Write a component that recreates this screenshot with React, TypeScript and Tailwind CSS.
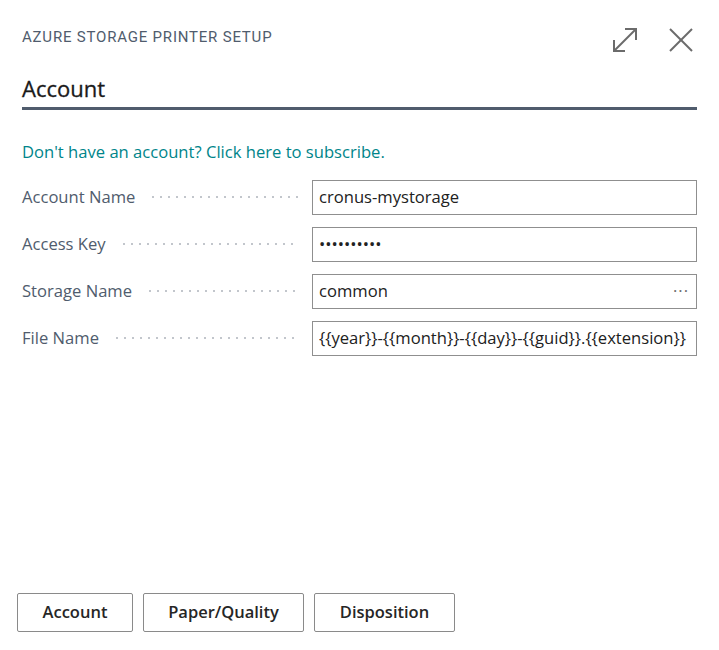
import { useState } from "react";

type Field = {
  label: string;
  value: string;
  lookup?: boolean;
};

const fields: Field[] = [
  { label: "Account Name", value: "cronus-mystorage" },
  { label: "Access Key", value: "••••••••••" },
  { label: "Storage Name", value: "common", lookup: true },
  { label: "File Name", value: "{{year}}-{{month}}-{{day}}-{{guid}}.{{extension}}" },
];

const tabs = ["Account", "Paper/Quality", "Disposition"];

function ExpandIcon() {
  return (
    <svg width="28" height="28" viewBox="0 0 28 28" fill="none" stroke="#6b6b6b" strokeWidth="2">
      <path d="M3 25 L25 3" />
      <path d="M14 3 H25 V14" />
      <path d="M3 14 V25 H14" />
    </svg>
  );
}

function CloseIcon() {
  return (
    <svg width="24" height="24" viewBox="0 0 24 24" fill="none" stroke="#6b6b6b" strokeWidth="2">
      <path d="M1 1 L23 23" />
      <path d="M23 1 L1 23" />
    </svg>
  );
}

export default function App() {
  const [activeTab, setActiveTab] = useState("Account");

  return (
    <div className="h-[650px] w-[719px] bg-white flex flex-col font-['Open_Sans',sans-serif]">
      <div className="flex items-start justify-between pl-[22px] pr-[26px] pt-[26px]">
        <div className="text-[15px] leading-[20px] tracking-[0.8px] text-[#505c6d] font-['Roboto',sans-serif] mt-[1px]">
          AZURE STORAGE PRINTER SETUP
        </div>
        <div className="flex items-center gap-[30px]">
          <button className="w-[28px] h-[28px]">
            <ExpandIcon />
          </button>
          <button className="w-[24px] h-[24px]">
            <CloseIcon />
          </button>
        </div>
      </div>

      <div className="mx-[22px] mt-[20px] border-b-[3px] border-[#505c6d] pb-[5px]">
        <h1 className="text-[22px] leading-[28px] [-webkit-text-stroke:0.3px_#1a1a1a] text-[#1a1a1a]">{activeTab}</h1>
      </div>

      <div className="px-[22px] mt-[30px] text-[16.6px]">
        <a className="leading-[24px] text-[#00858a] cursor-pointer">
          Don't have an account? Click here to subscribe.
        </a>

        <div className="mt-[15px] flex flex-col gap-[12px]">
          {fields.map((field) => (
            <div key={field.label} className="flex items-center">
              <div className="w-[278px] flex items-center gap-[14px] pr-[2px]">
                <span className="text-[#505c6d] whitespace-nowrap">{field.label}</span>
                <span className="flex-1 h-[2px] bg-[radial-gradient(circle,#c2c6cc_0.9px,transparent_1.1px)] bg-[length:8px_2px] bg-repeat-x" />
              </div>
              <div className="ml-[12px] flex-1 h-[35px] border border-[#8f8f8f] flex items-center pl-[6px] pr-[4px] text-[#212121]">
                <span className="flex-1 whitespace-nowrap overflow-hidden">{field.value}</span>
                {field.lookup && <span className="text-[#6b6b6b] tracking-[1px] pr-[3px]">···</span>}
              </div>
            </div>
          ))}
        </div>
      </div>

      <div className="mt-auto flex gap-[10px] pl-[17px] pb-[18px]">
        {tabs.map((tab) => (
          <button
            key={tab}
            onClick={() => setActiveTab(tab)}
            className={
              "h-[39px] rounded-[2px] border border-[#8a8a8a] bg-white text-[16.5px] font-semibold text-[#262626] " +
              (tab === "Account" ? "w-[116px]" : tab === "Paper/Quality" ? "w-[161px]" : "w-[141px]")
            }
          >
            {tab}
          </button>
        ))}
      </div>
    </div>
  );
}
